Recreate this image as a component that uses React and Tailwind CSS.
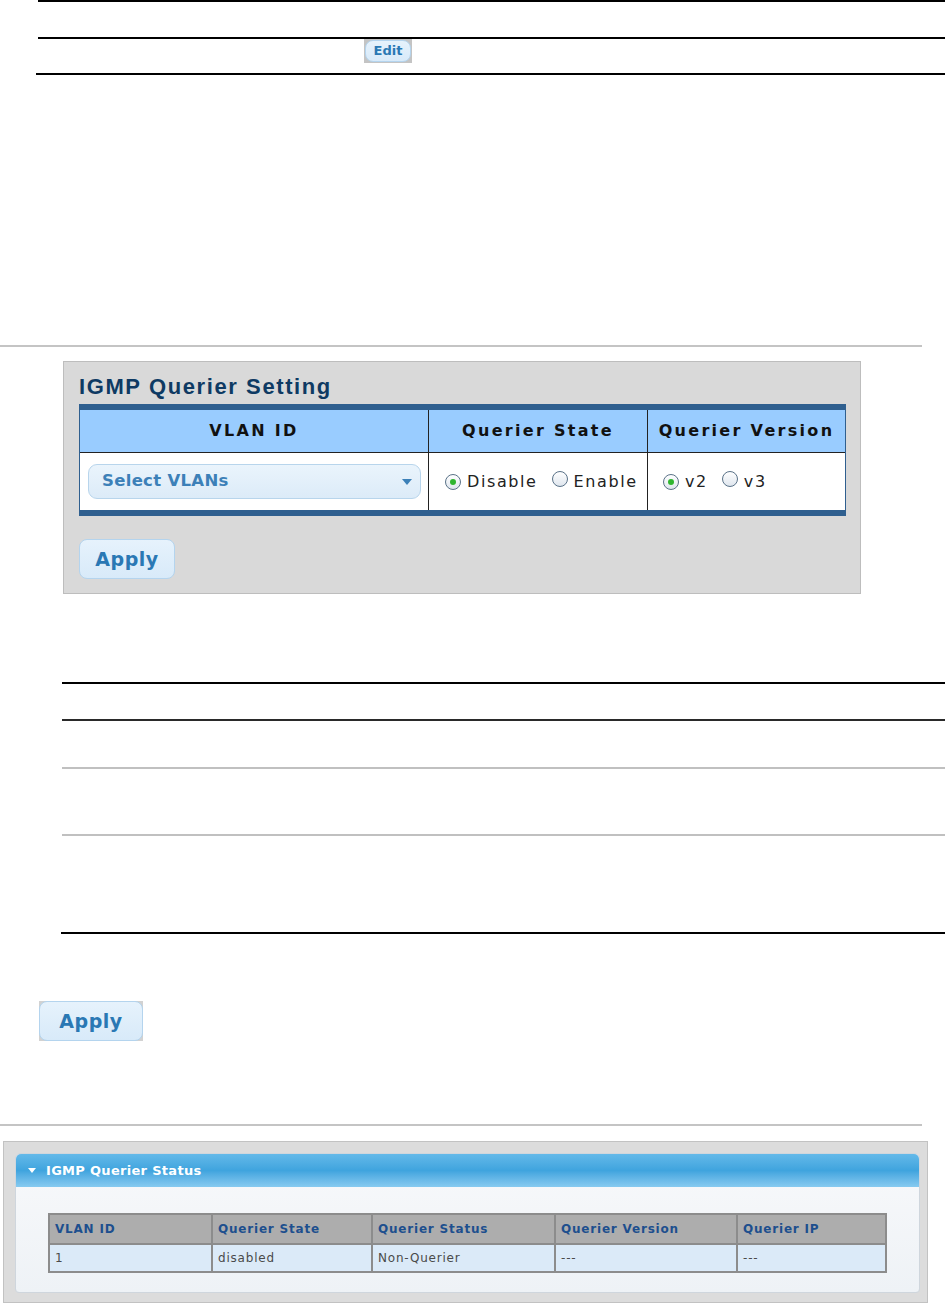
import React from "react";

const dv = { fontFamily: '"DejaVu Sans", Verdana, sans-serif' };
const ar = { fontFamily: '"Liberation Sans", Arial, sans-serif' };

function Radio({ checked }) {
  return (
    <span className="inline-flex h-[16px] w-[16px] items-center justify-center rounded-full border border-[#5a7288] bg-gradient-to-b from-[#ffffff] to-[#dfe6ee]">
      {checked && <span className="h-[6px] w-[6px] rounded-full bg-[#2fb52f]" />}
    </span>
  );
}

function BlueButton({ label, className }) {
  return (
    <button
      className={`flex items-center justify-center rounded-[8px] border border-[#b4d4ee] bg-gradient-to-b from-[#e6f2fc] to-[#d8eaf9] font-bold text-[#2a78b4] ${className}`}
      style={dv}
    >
      {label}
    </button>
  );
}

export default function App() {
  return (
    <div className="relative w-[945px] min-h-[1303px] bg-white" style={dv}>
      {/* top fragment of a table */}
      <div className="pl-[38px]">
        <div className="h-[37px] border-t-2 border-black" />
        <div className="flex h-[36px] items-start border-t-2 border-black pl-[326px]">
          <div className="flex h-[24px] w-[48px] items-center justify-center bg-[#c4c4c4] p-px">
            <BlueButton label="Edit" className="h-full w-full rounded-[4px] text-[13px]" />
          </div>
        </div>
        <div className="ml-[-2px] border-t-2 border-black" />
      </div>

      <div className="mt-[270px] w-[922px] border-t-2 border-[#c4c4c4]" />

      {/* IGMP Querier Setting */}
      <div className="ml-[63px] mt-[14px] h-[233px] w-[798px] border border-[#bdbdbd] bg-[#d9d9d9] px-[15px] pt-[12px]">
        <div className="text-[22px] font-bold leading-[26px] tracking-[1.6px] text-[#0e3a63]" style={ar}>
          IGMP Querier Setting
        </div>
        <div className="mt-[4px] w-[767px] border-x border-[#2f5f8f] border-y-[6px]">
          <div className="flex h-[42px] bg-[#99ccff] text-[16px] font-bold tracking-[2.3px] text-[#111]">
            <div className="flex w-[349px] items-center justify-center border-r border-[#222]">VLAN ID</div>
            <div className="flex w-[219px] items-center justify-center border-r border-[#222]">Querier State</div>
            <div className="flex flex-1 items-center justify-center">Querier Version</div>
          </div>
          <div className="flex h-[58px] border-t border-[#222] bg-white text-[16px] tracking-[1.6px] text-[#222]">
            <div className="flex w-[349px] items-center border-r border-[#222] pl-[8px]">
              <div className="flex h-[35px] w-[333px] items-center justify-between rounded-[9px] border border-[#b8d5ec] bg-gradient-to-b from-[#eaf4fc] to-[#dcebf8] pl-[13px] pr-[8px] text-[16.5px] font-bold tracking-[0.3px] text-[#3c80b8]">
                <span>Select VLANs</span>
                <svg width="10" height="6" viewBox="0 0 10 6">
                  <path d="M0 0 H10 L5 6 Z" fill="#3c80b8" />
                </svg>
              </div>
            </div>
            <div className="flex w-[219px] items-center gap-[7px] border-r border-[#222] pl-[16px]">
              <Radio checked />
              <span className="-ml-[1px]">Disable</span>
              <span className="ml-[7px]"><Radio /></span>
              <span className="-ml-[1px]">Enable</span>
            </div>
            <div className="flex flex-1 items-center gap-[6px] pl-[15px]">
              <Radio checked />
              <span>v2</span>
              <span className="ml-[8px]"><Radio /></span>
              <span>v3</span>
            </div>
          </div>
        </div>
        <BlueButton label="Apply" className="mt-[23px] h-[40px] w-[96px] text-[19px] tracking-[0.5px]" />
      </div>

      {/* second table fragment */}
      <div className="ml-[62px] mt-[88px]">
        <div className="h-[37px] border-t-2 border-black" />
        <div className="h-[48px] border-t-2 border-[#2a2a2a]" />
        <div className="h-[67px] border-t-2 border-[#c0c0c0]" />
        <div className="h-[98px] border-t-2 border-[#c0c0c0]" />
        <div className="-ml-px border-t-2 border-black" />
      </div>

      <div className="ml-[39px] mt-[67px] h-[40px] w-[104px] bg-[#d2d2d2]">
        <BlueButton label="Apply" className="h-full w-full text-[19px] tracking-[0.5px]" />
      </div>

      <div className="mt-[83px] w-[922px] border-t-2 border-[#c4c4c4]" />

      {/* IGMP Querier Status */}
      <div className="ml-[3px] mt-[15px] h-[162px] w-[925px] border border-[#c2c2c2] bg-[#dcdcdc] px-[11px] pt-[11px]">
        <div className="h-[140px] w-[905px] overflow-hidden rounded-t-[6px] rounded-b-[4px] border border-[#cfd6dd] bg-gradient-to-b from-[#f8f9fb] to-[#eef2f6]">
          <div className="flex h-[33px] items-center bg-gradient-to-b from-[#63b9e9] via-[#3fa4de] to-[#86caf0] pl-[12px] text-[13px] font-bold tracking-[0.3px] text-white">
            <svg width="8" height="5" viewBox="0 0 8 5" className="mr-[10px]">
              <path d="M0 0 H8 L4 5 Z" fill="#fff" />
            </svg>
            IGMP Querier Status
          </div>
          <div className="ml-[32px] mt-[26px] w-[839px] border-2 border-[#8c8c8c] text-[12px] tracking-[0.8px]">
            <div className="flex h-[28px] bg-[#adadad] font-bold text-[#1d4f8e]">
              <div className="flex w-[163px] items-center border-r-2 border-[#8c8c8c] pl-[5px]">VLAN ID</div>
              <div className="flex w-[160px] items-center border-r-2 border-[#8c8c8c] pl-[5px]">Querier State</div>
              <div className="flex w-[183px] items-center border-r-2 border-[#8c8c8c] pl-[5px]">Querier Status</div>
              <div className="flex w-[182px] items-center border-r-2 border-[#8c8c8c] pl-[5px]">Querier Version</div>
              <div className="flex flex-1 items-center pl-[5px]">Querier IP</div>
            </div>
            <div className="flex h-[28px] border-t-2 border-[#8c8c8c] bg-[#dbeaf8] text-[#4a4a4a]">
              <div className="flex w-[163px] items-center border-r-2 border-[#8c8c8c] pl-[5px]">1</div>
              <div className="flex w-[160px] items-center border-r-2 border-[#8c8c8c] pl-[5px]">disabled</div>
              <div className="flex w-[183px] items-center border-r-2 border-[#8c8c8c] pl-[5px]">Non-Querier</div>
              <div className="flex w-[182px] items-center border-r-2 border-[#8c8c8c] pl-[5px]">---</div>
              <div className="flex flex-1 items-center pl-[5px]">---</div>
            </div>
          </div>
        </div>
      </div>
    </div>
  );
}
